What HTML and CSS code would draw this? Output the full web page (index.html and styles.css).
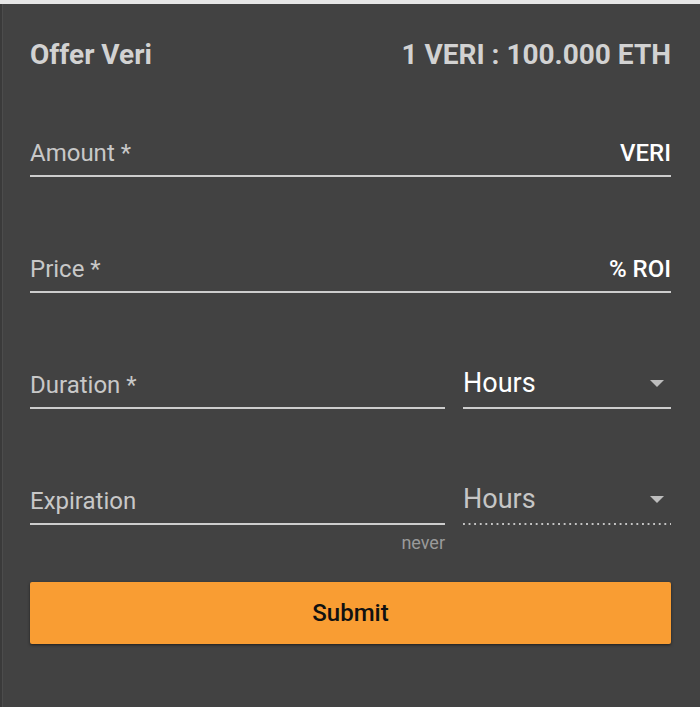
FILE: index.html
```html
<!DOCTYPE html>
<html>
<head>
<meta charset="utf-8">
<link rel="stylesheet" href="styles.css">
</head>
<body>
<div class="card">
  <div class="header">
    <span class="title">Offer Veri</span>
    <span class="rate">1 VERI : 100.000 ETH</span>
  </div>

  <div class="row first">
    <div class="field grow"><span class="label">Amount *</span><span class="unit">VERI</span></div>
  </div>

  <div class="row">
    <div class="field grow"><span class="label">Price *</span><span class="unit">% ROI</span></div>
  </div>

  <div class="row">
    <div class="col grow"><div class="field"><span class="label">Duration *</span></div></div>
    <div class="select">
      <span class="value">Hours</span>
      <svg class="arrow" width="16" height="8" viewBox="0 0 16 8"><path d="M1 0 L15 0 L8 7 Z" fill="#bdbdbd"/></svg>
    </div>
  </div>

  <div class="row">
    <div class="col grow">
      <div class="field"><span class="label">Expiration</span></div>
      <div class="helper">never</div>
    </div>
    <div class="select disabled">
      <span class="value">Hours</span>
      <svg class="arrow" width="16" height="8" viewBox="0 0 16 8"><path d="M1 0 L15 0 L8 7 Z" fill="#bdbdbd"/></svg>
    </div>
  </div>

  <button class="submit">Submit</button>
</div>
</body>
</html>
```

FILE: styles.css
```css
html, body {
  margin: 0;
  padding: 0;
}
body {
  background: #e6e6e6;
  font-family: Roboto, "Liberation Sans", Arial, sans-serif;
}
.card {
  margin-top: 4px;
  height: 703px;
  box-sizing: border-box;
  background: #424242;
  padding: 31px 29px 0 30px;
  box-shadow: inset 2px 0 0 #3a3a3a, inset 3px 0 0 #4c4c4c;
}
.header {
  display: flex;
  justify-content: space-between;
  align-items: baseline;
  line-height: 40px;
  font-size: 28px;
  font-weight: 700;
  color: #d2d2d2;
}
.row {
  display: flex;
  align-items: flex-start;
  gap: 18px;
  margin-top: 76px;
}
.row.first {
  margin-top: 62px;
}
.grow {
  flex: 1;
  min-width: 0;
}
.field {
  display: flex;
  justify-content: space-between;
  align-items: baseline;
  line-height: 32px;
  padding-bottom: 6px;
  border-bottom: 2px solid #cdcdcd;
}
.label {
  font-size: 24px;
  color: #c8c8c8;
}
.unit {
  font-size: 24px;
  font-weight: 500;
  color: #ffffff;
}
.helper {
  margin-top: 8px;
  text-align: right;
  font-size: 18px;
  line-height: 20px;
  color: #9a9a9a;
}
.select {
  width: 208px;
  display: flex;
  justify-content: space-between;
  align-items: center;
  line-height: 32px;
  padding-bottom: 6px;
  border-bottom: 2px solid #cdcdcd;
}
.select .value {
  font-size: 27px;
  color: #ffffff;
  position: relative;
  top: -2px;
}
.select .arrow {
  margin-right: 6px;
  margin-top: -3px;
}
.select.disabled {
  border-bottom: none;
  padding-bottom: 8px;
  background: linear-gradient(to right, #c4c4c4 2px, transparent 2px) left bottom / 5.6px 2px repeat-x;
}
.select.disabled .value {
  color: #c6c6c6;
}
.submit {
  display: block;
  width: 100%;
  height: 62px;
  margin-top: 29px;
  border: none;
  border-radius: 2px;
  background: #f99d33;
  box-shadow: 0 1px 3px rgba(0, 0, 0, 0.55);
  font-family: Roboto, "Liberation Sans", Arial, sans-serif;
  font-size: 24px;
  font-weight: 500;
  color: #111111;
  padding: 0;
}
```
